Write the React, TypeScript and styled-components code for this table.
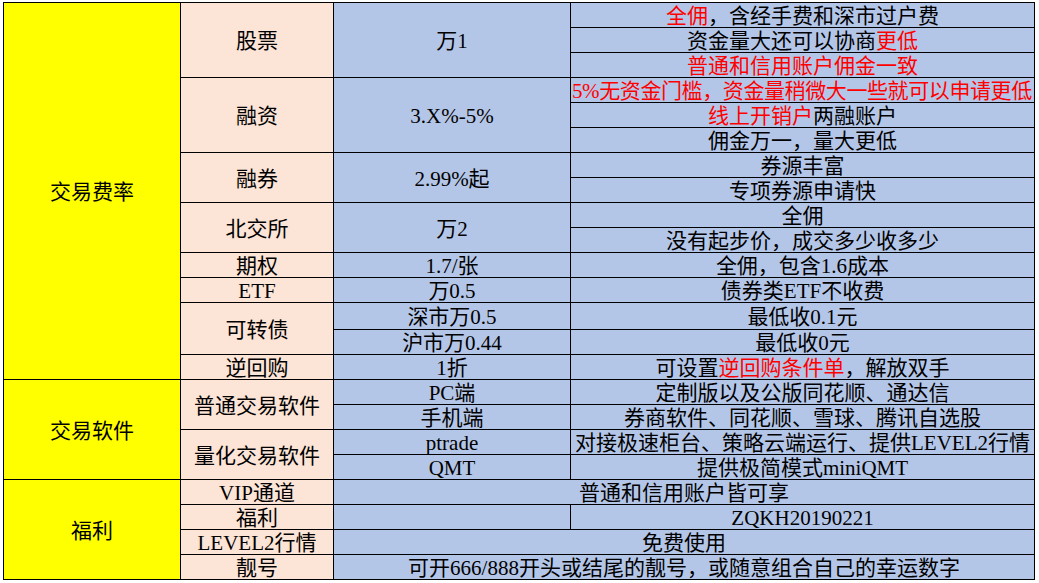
import React from "react";
import styled, { createGlobalStyle } from "styled-components";

const GlobalStyle = createGlobalStyle`
  html, body {
    margin: 0;
    padding: 0;
    background: #ffffff;
  }
`;

const yellow = "#ffff00";
const peach = "#fce4d6";
const blue = "#b4c6e7";

const Page = styled.div`
  padding: 2px 0 0 3px;
  width: 1039px;
  height: 583px;
  box-sizing: border-box;
  overflow: hidden;
`;

const Sheet = styled.div`
  display: grid;
  grid-template-columns: 176px 152px 236px 463px;
  grid-template-rows: repeat(12, 24px) 26px repeat(10, 24px);
  gap: 1px;
  padding: 1px;
  width: max-content;
  background: #000000;
  font-family: "Liberation Serif", "Noto Sans CJK SC", serif;
  font-size: 21px;
  color: #000000;
`;

const Cell = styled.div<{
  $r: number;
  $c: number;
  $rs?: number;
  $cs?: number;
  $bg: string;
  $left?: boolean;
}>`
  grid-row: ${(p) => p.$r} / span ${(p) => p.$rs ?? 1};
  grid-column: ${(p) => p.$c} / span ${(p) => p.$cs ?? 1};
  background: ${(p) => p.$bg};
  display: flex;
  align-items: center;
  justify-content: ${(p) => (p.$left ? "flex-start" : "center")};
  padding: 3px 0 0 ${(p) => (p.$left ? "1px" : "0")};
  box-sizing: border-box;
  line-height: 21px;
  letter-spacing: ${(p) => (p.$left ? "-0.4px" : "normal")};
  white-space: nowrap;
  overflow: visible;
  position: relative;
  z-index: ${(p) => (p.$left ? 1 : "auto")};
`;

const Red = styled.span`
  color: #ff0000;
`;

type Item = {
  r: number;
  c: number;
  rs?: number;
  cs?: number;
  left?: boolean;
  text: React.ReactNode;
};

const groups: Item[] = [
  { r: 1, c: 1, rs: 15, text: "交易费率" },
  { r: 16, c: 1, rs: 4, text: "交易软件" },
  { r: 20, c: 1, rs: 4, text: "福利" },
];

const kinds: Item[] = [
  { r: 1, c: 2, rs: 3, text: "股票" },
  { r: 4, c: 2, rs: 3, text: "融资" },
  { r: 7, c: 2, rs: 2, text: "融券" },
  { r: 9, c: 2, rs: 2, text: "北交所" },
  { r: 11, c: 2, text: "期权" },
  { r: 12, c: 2, text: "ETF" },
  { r: 13, c: 2, rs: 2, text: "可转债" },
  { r: 15, c: 2, text: "逆回购" },
  { r: 16, c: 2, rs: 2, text: "普通交易软件" },
  { r: 18, c: 2, rs: 2, text: "量化交易软件" },
  { r: 20, c: 2, text: "VIP通道" },
  { r: 21, c: 2, text: "福利" },
  { r: 22, c: 2, text: "LEVEL2行情" },
  { r: 23, c: 2, text: "靓号" },
];

const rates: Item[] = [
  { r: 1, c: 3, rs: 3, text: "万1" },
  { r: 4, c: 3, rs: 3, text: "3.X%-5%" },
  { r: 7, c: 3, rs: 2, text: "2.99%起" },
  { r: 9, c: 3, rs: 2, text: "万2" },
  { r: 11, c: 3, text: "1.7/张" },
  { r: 12, c: 3, text: "万0.5" },
  { r: 13, c: 3, text: "深市万0.5" },
  { r: 14, c: 3, text: "沪市万0.44" },
  { r: 15, c: 3, text: "1折" },
  { r: 16, c: 3, text: "PC端" },
  { r: 17, c: 3, text: "手机端" },
  { r: 18, c: 3, text: "ptrade" },
  { r: 19, c: 3, text: "QMT" },
  { r: 20, c: 3, cs: 2, text: "普通和信用账户皆可享" },
  { r: 21, c: 3, text: "" },
  { r: 22, c: 3, cs: 2, text: "免费使用" },
  { r: 23, c: 3, cs: 2, text: "可开666/888开头或结尾的靓号，或随意组合自己的幸运数字" },
];

const notes: Item[] = [
  {
    r: 1,
    c: 4,
    text: (
      <>
        <Red>全佣</Red>，含经手费和深市过户费
      </>
    ),
  },
  {
    r: 2,
    c: 4,
    text: (
      <>
        资金量大还可以协商<Red>更低</Red>
      </>
    ),
  },
  { r: 3, c: 4, text: <Red>普通和信用账户佣金一致</Red> },
  {
    r: 4,
    c: 4,
    left: true,
    text: <Red>5%无资金门槛，资金量稍微大一些就可以申请更低</Red>,
  },
  {
    r: 5,
    c: 4,
    text: (
      <>
        <Red>线上开销户</Red>两融账户
      </>
    ),
  },
  { r: 6, c: 4, text: "佣金万一，量大更低" },
  { r: 7, c: 4, text: "券源丰富" },
  { r: 8, c: 4, text: "专项券源申请快" },
  { r: 9, c: 4, text: "全佣" },
  { r: 10, c: 4, text: "没有起步价，成交多少收多少" },
  { r: 11, c: 4, text: "全佣，包含1.6成本" },
  { r: 12, c: 4, text: "债券类ETF不收费" },
  { r: 13, c: 4, text: "最低收0.1元" },
  { r: 14, c: 4, text: "最低收0元" },
  {
    r: 15,
    c: 4,
    text: (
      <>
        可设置<Red>逆回购条件单</Red>，解放双手
      </>
    ),
  },
  { r: 16, c: 4, text: "定制版以及公版同花顺、通达信" },
  { r: 17, c: 4, text: "券商软件、同花顺、雪球、腾讯自选股" },
  { r: 18, c: 4, text: "对接极速柜台、策略云端运行、提供LEVEL2行情" },
  { r: 19, c: 4, text: "提供极简模式miniQMT" },
  { r: 21, c: 4, text: "ZQKH20190221" },
];

const renderCells = (items: Item[], bg: string) =>
  items.map((it) => (
    <Cell
      key={`${it.r}-${it.c}`}
      $r={it.r}
      $c={it.c}
      $rs={it.rs}
      $cs={it.cs}
      $left={it.left}
      $bg={bg}
    >
      {it.text}
    </Cell>
  ));

export default function App() {
  return (
    <Page>
      <GlobalStyle />
      <Sheet>
        {renderCells(groups, yellow)}
        {renderCells(kinds, peach)}
        {renderCells(rates, blue)}
        {renderCells(notes, blue)}
      </Sheet>
    </Page>
  );
}
